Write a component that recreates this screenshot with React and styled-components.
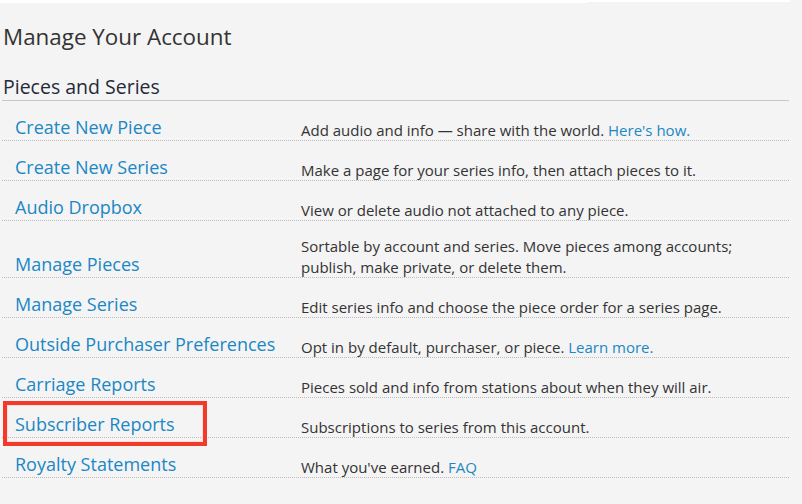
import React from 'react';
import styled, { createGlobalStyle } from 'styled-components';

const GlobalStyle = createGlobalStyle`
  html, body {
    margin: 0;
    padding: 0;
    background: #f4f4f4;
  }
  body {
    font-family: "Open Sans", "Liberation Sans", sans-serif;
    color: #333;
  }
`

const TopStrip = styled.div`
  display: flex;
  align-items: flex-start;
  width: 790px;
  height: 3px;
`
const StripSegment = styled.div`
  height: ${props => props.thin ? '2px' : '3px'};
  width: ${props => props.width};
  background: #fff;
`

const Page = styled.div`
  position: relative;
  width: 787px;
  padding-left: 2px;
`
const Title = styled.h1`
  margin: 0;
  padding: 19px 0 0 1px;
  font-size: 22.4px;
  font-weight: 400;
  line-height: 30px;
  color: #333;
`
const SectionTitle = styled.h2`
  margin: 0;
  padding: 22px 0 0 1px;
  font-size: 19.5px;
  font-weight: 400;
  line-height: 26px;
  color: #262a38;
  border-bottom: 1px solid #c8c8c8;
`
const List = styled.div`
  display: flex;
  flex-direction: column;
`
const Row = styled.div`
  display: grid;
  grid-template-columns: 299px 1fr;
  align-items: end;
  padding-top: 14px;
  border-bottom: 1px dotted #bcbcbc;
`
const RowLink = styled.a`
  padding-left: 13px;
  font-size: 18px;
  line-height: 25px;
  color: #1b87c4;
  text-decoration: none;
`
const Desc = styled.div`
  position: relative;
  top: 1px;
  font-size: 15px;
  line-height: 21px;
  color: #333;
`
const InlineLink = styled.a`
  color: #1b87c4;
  text-decoration: none;
`
const Highlight = styled.div`
  position: absolute;
  left: 3px;
  top: 398px;
  width: 196px;
  height: 37px;
  border: 4px solid #f23a2b;
  box-shadow: inset 0 0 0 1px #fdd;
  pointer-events: none;
`

const rows = [
  { label: 'Create New Piece', desc: <>Add audio and info — share with the world. <InlineLink href="#">Here's how.</InlineLink></> },
  { label: 'Create New Series', desc: 'Make a page for your series info, then attach pieces to it.' },
  { label: 'Audio Dropbox', desc: 'View or delete audio not attached to any piece.' },
  { label: 'Manage Pieces', desc: <>Sortable by account and series. Move pieces among accounts;<br />publish, make private, or delete them.</> },
  { label: 'Manage Series', desc: 'Edit series info and choose the piece order for a series page.' },
  { label: 'Outside Purchaser Preferences', desc: <>Opt in by default, purchaser, or piece. <InlineLink href="#">Learn more.</InlineLink></> },
  { label: 'Carriage Reports', desc: 'Pieces sold and info from stations about when they will air.' },
  { label: 'Subscriber Reports', desc: 'Subscriptions to series from this account.' },
  { label: 'Royalty Statements', desc: <>What you've earned. <InlineLink href="#">FAQ</InlineLink></> },
]

const App = () => {
  return (
    <>
      <GlobalStyle />
      <TopStrip>
        <StripSegment width="587px" />
        <StripSegment thin width="203px" />
      </TopStrip>
      <Page>
        <Title>Manage Your Account</Title>
        <SectionTitle>Pieces and Series</SectionTitle>
        <List>
          {rows.map(row => (
            <Row key={row.label}>
              <RowLink href="#">{row.label}</RowLink>
              <Desc>{row.desc}</Desc>
            </Row>
          ))}
        </List>
        <Highlight />
      </Page>
    </>
  );
};

export default App;
